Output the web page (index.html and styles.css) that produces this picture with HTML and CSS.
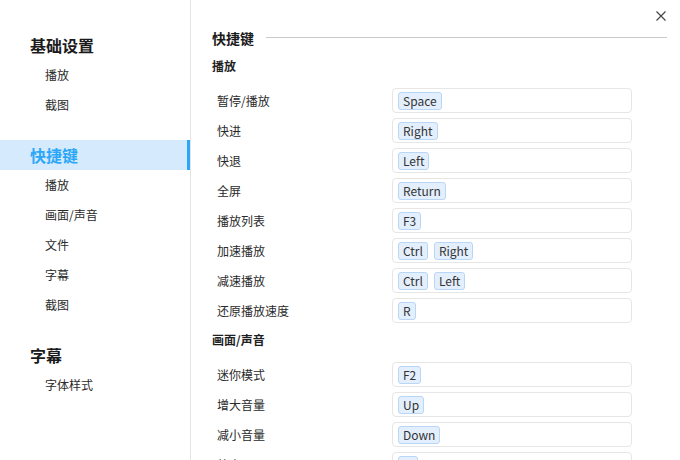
FILE: index.html
```html
<!DOCTYPE html>
<html lang="zh-CN">
<head>
<meta charset="UTF-8">
<title>设置</title>
<link rel="stylesheet" href="styles.css">
</head>
<body>

<div class="window">
  <nav class="sidebar">
    <div class="group">
      <div class="group-title">基础设置</div>
      <div class="nav-item">播放</div>
      <div class="nav-item">截图</div>
    </div>
    <div class="group">
      <div class="group-title active">快捷键</div>
      <div class="nav-item">播放</div>
      <div class="nav-item">画面/声音</div>
      <div class="nav-item">文件</div>
      <div class="nav-item">字幕</div>
      <div class="nav-item">截图</div>
    </div>
    <div class="group">
      <div class="group-title">字幕</div>
      <div class="nav-item">字体样式</div>
    </div>
  </nav>

  <main class="content">
    <div class="page-title">
      <span>快捷键</span>
      <div class="title-line"></div>
    </div>

    <div class="section-title">播放</div>
    <div class="shortcut"><div class="label">暂停/播放</div><div class="keys"><span class="key">Space</span></div></div>
    <div class="shortcut"><div class="label">快进</div><div class="keys"><span class="key">Right</span></div></div>
    <div class="shortcut"><div class="label">快退</div><div class="keys"><span class="key">Left</span></div></div>
    <div class="shortcut"><div class="label">全屏</div><div class="keys"><span class="key">Return</span></div></div>
    <div class="shortcut"><div class="label">播放列表</div><div class="keys"><span class="key">F3</span></div></div>
    <div class="shortcut"><div class="label">加速播放</div><div class="keys"><span class="key">Ctrl</span><span class="key">Right</span></div></div>
    <div class="shortcut"><div class="label">减速播放</div><div class="keys"><span class="key">Ctrl</span><span class="key">Left</span></div></div>
    <div class="shortcut"><div class="label">还原播放速度</div><div class="keys"><span class="key">R</span></div></div>

    <div class="section-title">画面/声音</div>
    <div class="shortcut"><div class="label">迷你模式</div><div class="keys"><span class="key">F2</span></div></div>
    <div class="shortcut"><div class="label">增大音量</div><div class="keys"><span class="key">Up</span></div></div>
    <div class="shortcut"><div class="label">减小音量</div><div class="keys"><span class="key">Down</span></div></div>
    <div class="shortcut"><div class="label">静音</div><div class="keys"><span class="key">M</span></div></div>
  </main>

  <button class="close-btn" title="关闭">
    <svg width="10" height="10" viewBox="0 0 10 10"><path d="M0.5 0.5L9.5 9.5M9.5 0.5L0.5 9.5" stroke="#404040" stroke-width="1.1" fill="none"/></svg>
  </button>
</div>

</body>
</html>
```

FILE: styles.css
```css
* { margin: 0; padding: 0; box-sizing: border-box; }
html, body { width: 680px; height: 460px; overflow: hidden; }
body { font-family: "Noto Sans CJK SC", "Noto Sans", sans-serif; background: #fff; color: #303030; }

.window { position: relative; display: flex; width: 680px; height: 460px; background: #fff; }

/* sidebar */
.sidebar { width: 191px; flex: none; border-right: 1px solid #e4e4e4; padding-top: 30px; }
.group { margin-bottom: 20px; }
.group-title { height: 30px; line-height: 30px; padding-left: 30px; font-size: 16px; font-weight: bold; color: #1b1b1b; }
.group-title.active { background: #d5ebfd; border-right: 3px solid #2ca7f8; color: #2ca7f8; }
.nav-item { height: 30px; line-height: 30px; padding-left: 45px; font-size: 12px; color: #2a2a2a; }

/* content */
.content { flex: 1; display: flex; flex-direction: column; padding: 28px 13px 0 21px; overflow: hidden; }
.content > * { flex: none; }
.page-title { display: flex; align-items: center; gap: 12px; height: 20px; line-height: 20px; font-size: 14px; font-weight: bold; color: #1b1b1b; margin-bottom: 6px; }
.title-line { flex: 1; height: 1px; background: #c9c9c9; margin-top: -2px; }
.section-title { height: 20px; line-height: 20px; margin: 2px 0 12px; font-size: 12px; font-weight: bold; color: #1f1f1f; }

.shortcut { display: flex; align-items: center; height: 25px; margin-bottom: 5px; }
.shortcut .label { width: 180px; padding-left: 5px; font-size: 12px; color: #2a2a2a; }
.keys { display: flex; align-items: center; gap: 6px; width: 240px; height: 25px; padding: 1px 5px 0; border: 1px solid #e6e6e6; border-radius: 4px; background: #fff; }
.key { height: 18px; line-height: 16px; padding: 0 4px; font-size: 12px; color: #333; background: #e4effd; border: 1px solid #b9d6f6; border-radius: 3px; }

.close-btn { position: absolute; top: 11px; right: 14px; width: 10px; height: 10px; border: none; background: none; display: flex; }
```
